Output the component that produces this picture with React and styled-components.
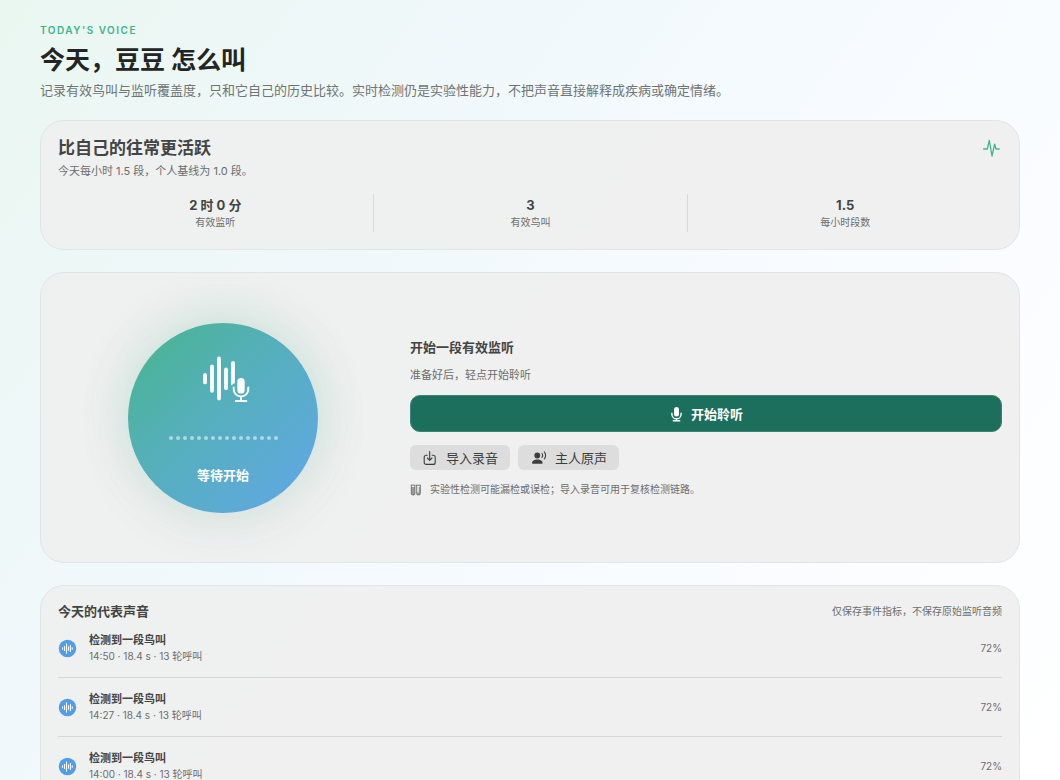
import React from 'react';
import styled, { createGlobalStyle } from 'styled-components';

const GlobalStyle = createGlobalStyle`
  * {
    box-sizing: border-box;
  }

  html {
    scrollbar-width: none;
  }

  body {
    margin: 0;
    min-height: 100vh;
    background: linear-gradient(126deg, #eaf7f1 0%, #f0f8fb 32%, #f7fbff 58%, #ffffff 100%) fixed;
    color: #434544;
    font-family: Inter, 'Noto Sans CJK SC', sans-serif;
  }

  h1, h2, h3, p, ul, dl, dd {
    margin: 0;
    padding: 0;
  }
`;

const Page = styled.main`
  display: flex;
  flex-direction: column;
  gap: 22px;
  padding: 24px 40px;
`;

const Header = styled.header`
  display: flex;
  flex-direction: column;
  gap: 8px;
`;

const Eyebrow = styled.p`
  color: #3fb389;
  font-size: 10px;
  font-weight: 600;
  line-height: 13px;
  letter-spacing: 1.5px;
`;

const Title = styled.h1`
  color: #222524;
  font-size: 25px;
  font-weight: 700;
  line-height: 30px;
`;

const Subtitle = styled.p`
  color: #6f7474;
  font-size: 13px;
  line-height: 15px;
`;

const Card = styled.section`
  padding: 17px;
  background: rgba(239, 239, 239, 0.92);
  border: 1px solid #e2e5e5;
  border-radius: 24px;
`;

const CardTop = styled.div`
  display: flex;
  justify-content: space-between;
  align-items: flex-start;
`;

const SummaryTitle = styled.h2`
  font-size: 17px;
  font-weight: 700;
  line-height: 20px;
`;

const Heading = styled.h2`
  font-size: 13px;
  font-weight: 700;
  line-height: 16px;
`;

const Text = styled.p`
  color: #6c6e6e;
  font-size: 11px;
  line-height: 14px;
`;

const SummaryText = styled(Text)`
  margin-top: 6px;
`;

const PulseIcon = styled.svg`
  width: 20px;
  height: 20px;
`;

const Stats = styled.dl`
  display: grid;
  grid-template-columns: repeat(3, 1fr);
  margin-top: 16px;
`;

const Stat = styled.div`
  display: flex;
  flex-direction: column-reverse;
  align-items: center;
  justify-content: center;
  gap: 3px;
  height: 38px;

  & + & {
    border-left: 1px solid #d8d9d9;
  }
`;

const StatValue = styled.dd`
  font-size: 13px;
  font-weight: 700;
  line-height: 16px;
`;

const StatLabel = styled.dt`
  color: #6c6e6e;
  font-size: 10px;
  line-height: 13px;
`;

const ListenCard = styled(Card)`
  display: grid;
  grid-template-columns: 330px 1fr;
  gap: 22px;
  align-items: center;
`;

const OrbArea = styled.div`
  display: flex;
  justify-content: center;
  align-items: center;
  min-height: 255px;
`;

const Orb = styled.div`
  display: flex;
  flex-direction: column;
  align-items: center;
  width: 190px;
  height: 190px;
  padding-top: 33px;
  border-radius: 50%;
  background: linear-gradient(135deg, #4ab494 8%, #54b0b8 40%, #60a8e2 92%);
  box-shadow:
    0 -8px 48px rgba(74, 190, 140, 0.17),
    0 6px 56px rgba(80, 140, 120, 0.1);
  color: #fff;
`;

const OrbIcon = styled.svg`
  width: 48px;
  height: 48px;
  margin-left: 6px;
`;

const Dots = styled.div`
  display: flex;
  gap: 3px;
  margin-top: 32px;
`;

const Dot = styled.span`
  width: 4px;
  height: 4px;
  border-radius: 50%;
  background: rgba(255, 255, 255, 0.52);
`;

const OrbLabel = styled.p`
  margin-top: 27px;
  font-size: 13px;
  font-weight: 700;
  line-height: 16px;
`;

const Controls = styled.div`
  display: flex;
  flex-direction: column;
  gap: 13px;
`;

const StartButton = styled.button`
  display: flex;
  justify-content: center;
  align-items: center;
  gap: 8px;
  height: 37px;
  border: 1px solid #3b8570;
  border-radius: 10px;
  background: #1b6f5c;
  color: #fff;
  font: inherit;
  font-size: 13px;
  font-weight: 700;
  cursor: pointer;
`;

const ButtonRow = styled.div`
  display: flex;
  gap: 8px;
`;

const SmallButton = styled.button`
  display: flex;
  align-items: center;
  gap: 8px;
  height: 25px;
  padding: 0 12px;
  border: none;
  border-radius: 6px;
  background: #dddddd;
  color: #3c3e3d;
  font: inherit;
  font-size: 13px;
  cursor: pointer;
`;

const Note = styled.p`
  display: flex;
  align-items: center;
  gap: 8px;
  color: #6c6e6e;
  font-size: 10px;
  line-height: 13px;
`;

const Hint = styled.p`
  color: #6c6e6e;
  font-size: 10px;
  line-height: 16px;
`;

const EventList = styled.ul`
  list-style: none;
`;

const EventItem = styled.li`
  display: flex;
  align-items: center;
  gap: 12px;
  padding: 13px 0;
  border-bottom: 1px solid #d6d8d8;
`;

const EventIcon = styled.svg`
  width: 19px;
  height: 19px;
`;

const EventInfo = styled.div`
  flex: 1;
`;

const EventTitle = styled.h3`
  font-size: 11px;
  font-weight: 600;
  line-height: 16px;
`;

const EventMeta = styled.p`
  color: #6c6e6e;
  font-size: 10px;
  line-height: 16px;
`;

const Confidence = styled.span`
  color: #6c6e6e;
  font-size: 10px;
`;

const stats = [
  { value: '2 时 0 分', label: '有效监听' },
  { value: '3', label: '有效鸟叫' },
  { value: '1.5', label: '每小时段数' },
];

const events = [
  { time: '14:50', length: '18.4 s', calls: 13, confidence: 72 },
  { time: '14:27', length: '18.4 s', calls: 13, confidence: 72 },
  { time: '14:00', length: '18.4 s', calls: 13, confidence: 72 },
];

const Pulse = () => (
  <PulseIcon viewBox="0 0 20 20" fill="none" stroke="#3fb58c" strokeWidth="1.3" strokeLinecap="round" strokeLinejoin="round">
    <path d="M1.6 11H5.3L7.3 2.4L10 18L12.6 6.2L14 11H17.2" />
  </PulseIcon>
);

const WaveMic = () => (
  <OrbIcon viewBox="0 0 48 48" fill="none" stroke="#fff" strokeLinecap="round">
    <g strokeWidth="3.8">
      <path d="M3 19V26.4M10 10.4V34.8M17 2.4V42.6M24 13.4V32.2" />
    </g>
    <path d="M29.1 7A1.9 1.9 0 0 1 32.9 7V27.2C31.4 27.6 30.6 28.2 30.1 29.3C29.5 29.3 29.1 28.8 29.1 28.2Z" fill="#fff" stroke="none" />
    <rect x="35.3" y="22" width="7.4" height="15.6" rx="3.7" fill="#fff" stroke="none" />
    <path d="M31.7 31.6V33.2A7.3 7.3 0 0 0 46.3 33.2V31.6M39 40.5V45M33.8 45H44.4" strokeWidth="2" />
  </OrbIcon>
);

const Mic = () => (
  <svg width="14" height="16" viewBox="0 0 14 16" fill="none" stroke="#fff" strokeWidth="1.4" strokeLinecap="round">
    <rect x="5" y="1" width="5" height="9.4" rx="2.5" fill="#fff" stroke="none" />
    <path d="M2.9 7.2V8.2A4.6 4.6 0 0 0 12.1 8.2V7.2M7.5 12.8V14.7M4.3 14.7H10.7" />
  </svg>
);

const ImportIcon = () => (
  <svg width="16" height="16" viewBox="0 0 16 16" fill="none" stroke="currentColor" strokeWidth="1.1" strokeLinecap="round" strokeLinejoin="round">
    <path d="M5.2 5.2H4.2A2 2 0 0 0 2.2 7.2V12.4A2 2 0 0 0 4.2 14.4H11.2A2 2 0 0 0 13.2 12.4V7.2A2 2 0 0 0 11.2 5.2H10.2M7.7 1.6V10.2M5.4 8L7.7 10.3L10 8" />
  </svg>
);

const OwnerIcon = () => (
  <svg width="17" height="16" viewBox="0 0 17 16" fill="none" stroke="currentColor" strokeWidth="1.1" strokeLinecap="round">
    <circle cx="7.3" cy="5.5" r="2.9" fill="currentColor" stroke="none" />
    <path d="M2 12.8C2 10.8 4.4 9.4 7.3 9.4S12.6 10.8 12.6 12.8C12.6 13.5 12.2 13.8 11.5 13.8H3.1C2.4 13.8 2 13.5 2 12.8Z" fill="currentColor" stroke="none" />
    <path d="M12 3.5C12.8 4.7 12.8 6.2 12 7.4M14.3 1.9C15.9 4.1 15.9 6.8 14.3 9" />
  </svg>
);

const TubesIcon = () => (
  <svg width="12" height="12" viewBox="0 0 12 12" fill="none" stroke="currentColor" strokeWidth="0.9">
    <path d="M0.8 1.2H5.4M6.2 1.2H10.8" />
    <path d="M1.3 1V9.7A1.2 1.2 0 0 0 2.5 10.9H3.7A1.2 1.2 0 0 0 4.9 9.7V1M6.7 1V9.7A1.2 1.2 0 0 0 7.9 10.9H9.1A1.2 1.2 0 0 0 10.3 9.7V1" />
    <path d="M1.3 3H4.9V10.9H1.3ZM8.8 3H10.3V10.9H6.7V8.6H8.8Z" fill="currentColor" fillOpacity="0.65" stroke="none" />
  </svg>
);

const WaveBadge = () => (
  <EventIcon viewBox="0 0 19 19" fill="none" stroke="#fff" strokeWidth="1.1" strokeLinecap="round">
    <circle cx="9.5" cy="9.5" r="8.7" fill="#509de8" stroke="none" />
    <path d="M4.5 8.8V10.2M6.5 7.5V11.5M8.5 4.9V14.1M10.5 7.8V11.2M12.4 6.4V12.6M14.2 8.8V10.2" />
  </EventIcon>
);

const App = () => {
  return (
    <>
      <GlobalStyle />
      <Page>
        <Header>
          <Eyebrow>TODAY'S VOICE</Eyebrow>
          <Title>今天，豆豆 怎么叫</Title>
          <Subtitle>
            记录有效鸟叫与监听覆盖度，只和它自己的历史比较。实时检测仍是实验性能力，不把声音直接解释成疾病或确定情绪。
          </Subtitle>
        </Header>

        <Card>
          <CardTop>
            <div>
              <SummaryTitle>比自己的往常更活跃</SummaryTitle>
              <SummaryText>今天每小时 1.5 段，个人基线为 1.0 段。</SummaryText>
            </div>
            <Pulse />
          </CardTop>
          <Stats>
            {stats.map((stat) => (
              <Stat key={stat.label}>
                <StatLabel>{stat.label}</StatLabel>
                <StatValue>{stat.value}</StatValue>
              </Stat>
            ))}
          </Stats>
        </Card>

        <ListenCard>
          <OrbArea>
            <Orb>
              <WaveMic />
              <Dots>
                {Array.from({ length: 16 }, (_, i) => (
                  <Dot key={i} />
                ))}
              </Dots>
              <OrbLabel>等待开始</OrbLabel>
            </Orb>
          </OrbArea>
          <Controls>
            <Heading>开始一段有效监听</Heading>
            <Text>准备好后，轻点开始聆听</Text>
            <StartButton type="button">
              <Mic />
              开始聆听
            </StartButton>
            <ButtonRow>
              <SmallButton type="button">
                <ImportIcon />
                导入录音
              </SmallButton>
              <SmallButton type="button">
                <OwnerIcon />
                主人原声
              </SmallButton>
            </ButtonRow>
            <Note>
              <TubesIcon />
              实验性检测可能漏检或误检；导入录音可用于复核检测链路。
            </Note>
          </Controls>
        </ListenCard>

        <Card>
          <CardTop>
            <Heading>今天的代表声音</Heading>
            <Hint>仅保存事件指标，不保存原始监听音频</Hint>
          </CardTop>
          <EventList>
            {events.map((event) => (
              <EventItem key={event.time}>
                <WaveBadge />
                <EventInfo>
                  <EventTitle>检测到一段鸟叫</EventTitle>
                  <EventMeta>
                    {event.time} · {event.length} · {event.calls} 轮呼叫
                  </EventMeta>
                </EventInfo>
                <Confidence>{event.confidence}%</Confidence>
              </EventItem>
            ))}
          </EventList>
        </Card>
      </Page>
    </>
  );
};

export default App;
